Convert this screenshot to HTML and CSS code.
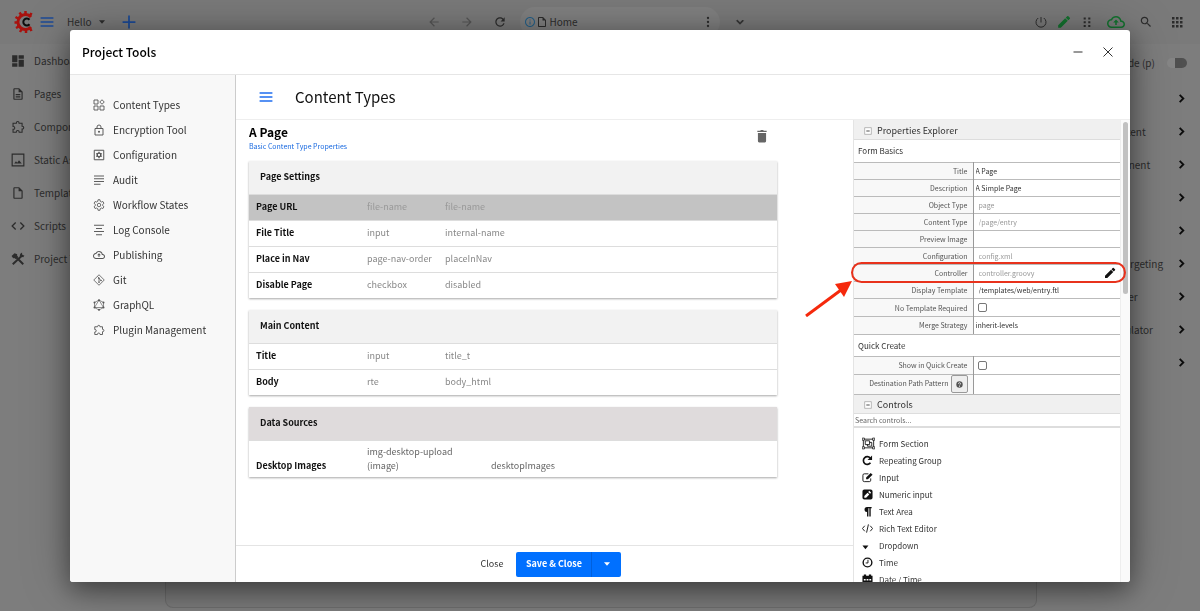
FILE: index.html
```
<!DOCTYPE html>
<html lang="en">
<head>
    <meta charset="UTF-8">
    <title>Project Tools - Content Types</title>
    <link rel="stylesheet" href="styles.css">
</head>
<body>
    <!-- Icon set -->
    <svg class="sprite" aria-hidden="true">
        <symbol id="i-menu" viewBox="0 0 24 24"><path d="M1 5h22M1 12h22M1 19h22" stroke="currentColor" stroke-width="2.6" fill="none"/></symbol>
        <symbol id="i-caret" viewBox="0 0 24 24"><path d="M3 7l9 10 9-10z"/></symbol>
        <symbol id="i-plus" viewBox="0 0 24 24"><path d="M12 1v22M1 12h22" stroke="currentColor" stroke-width="3" fill="none"/></symbol>
        <symbol id="i-back" viewBox="0 0 24 24"><path d="M20 11H7.83l5.59-5.59L12 4l-8 8 8 8 1.41-1.41L7.83 13H20v-2z"/></symbol>
        <symbol id="i-forward" viewBox="0 0 24 24"><path d="M12 4l-1.41 1.41L16.17 11H4v2h12.17l-5.58 5.59L12 20l8-8z"/></symbol>
        <symbol id="i-refresh" viewBox="0 0 24 24"><path d="M17.65 6.35C16.2 4.9 14.21 4 12 4c-4.42 0-7.99 3.58-7.99 8s3.57 8 7.99 8c3.73 0 6.84-2.55 7.73-6h-2.08c-.82 2.33-3.04 4-5.65 4-3.31 0-6-2.69-6-6s2.69-6 6-6c1.66 0 3.14.69 4.22 1.78L13 11h7V4l-2.35 2.35z"/></symbol>
        <symbol id="i-info" viewBox="0 0 24 24"><path d="M11 7h2v2h-2zm0 4h2v6h-2zm1-9C6.48 2 2 6.48 2 12s4.480 10 10 10 10-4.480 10-10S17.52 2 12 2zm0 18c-4.410 0-8-3.590-8-8s3.590-8 8-8 8 3.590 8 8-3.590 8-8 8z"/></symbol>
        <symbol id="i-file" viewBox="0 0 24 24"><path d="M14 2H6c-1.100 0-2 .9-2 2v16c0 1.100.9 2 2 2h12c1.100 0 2-.9 2-2V8l-6-6zM6 20V4h7v5h5v11H6z"/></symbol>
        <symbol id="i-more" viewBox="0 0 24 24"><circle cx="12" cy="4" r="2.300"/><circle cx="12" cy="12" r="2.300"/><circle cx="12" cy="20" r="2.300"/></symbol>
        <symbol id="i-down" viewBox="0 0 24 24"><path d="M7.410 8.590L12 13.170l4.590-4.580L18 10l-6 6-6-6z" stroke="currentColor"/></symbol>
        <symbol id="i-right" viewBox="0 0 24 24"><path d="M8 4l8 8-8 8" stroke="currentColor" stroke-width="4" fill="none"/></symbol>
        <symbol id="i-power" viewBox="0 0 24 24"><path d="M12 2v11M6.500 4a10 10 0 1 0 11 0" fill="none" stroke="currentColor" stroke-width="2"/></symbol>
        <symbol id="i-pencil" viewBox="0 0 24 24"><path d="M2 17.500V22h4.500L18.500 10 14 5.500zM22 6.500a1.500 1.500 0 0 0 0-2L19.500 2a1.500 1.500 0 0 0-2 0L15 4.500 19.500 9z"/></symbol>
        <symbol id="i-grip" viewBox="0 0 24 24"><path d="M4 1h5v5H4zM15 1h5v5h-5zM4 10h5v5H4zM15 10h5v5h-5zM4 19h5v5H4zM15 19h5v5h-5z"/></symbol>
        <symbol id="i-cloud" viewBox="0 0 24 24"><path d="M19.350 10.040C18.670 6.590 15.640 4 12 4 9.110 4 6.600 5.640 5.350 8.040 2.340 8.360 0 10.910 0 14c0 3.310 2.690 6 6 6h13c2.760 0 5-2.240 5-5 0-2.640-2.050-4.780-4.650-4.960zM19 18H6c-2.210 0-4-1.790-4-4 0-2.050 1.530-3.760 3.560-3.970l1.070-.11.5-.95C8.080 7.140 9.940 6 12 6c2.620 0 4.880 1.860 5.390 4.430l.3 1.500 1.530.11c1.560.1 2.780 1.410 2.780 2.960 0 1.650-1.350 3-3 3z"/><path d="M12 8.500L8.300 12.500H11V16h2v-3.500h2.700z"/></symbol>
        <symbol id="i-search" viewBox="0 0 24 24"><path d="M15.500 14h-.79l-.28-.27C15.410 12.590 16 11.110 16 9.500 16 5.910 13.090 3 9.500 3S3 5.910 3 9.500 5.910 16 9.500 16c1.610 0 3.090-.59 4.230-1.570l.27.28v.79l5 4.990L20.490 19l-4.990-5zm-6 0C7.010 14 5 11.990 5 9.500S7.010 5 9.500 5 14 7.010 14 9.500 11.990 14 9.500 14z"/></symbol>
        <symbol id="i-apps" viewBox="0 0 24 24"><path d="M2 2h5v5H2zM10 2h5v5h-5zM18 2h5v5h-5zM2 10h5v5H2zM10 10h5v5h-5zM18 10h5v5h-5zM2 18h5v5H2zM10 18h5v5h-5zM18 18h5v5h-5z"/></symbol>
        <symbol id="i-dashboard" viewBox="0 0 24 24"><path d="M2 2h9v12H2zM2 16h9v6H2zM13 2h9v6h-9zM13 10h9v12h-9z"/></symbol>
        <symbol id="i-page" viewBox="0 0 24 24"><path d="M8 16h8v2H8zm0-4h8v2H8zm6-10H6c-1.100 0-2 .9-2 2v16c0 1.100.89 2 1.990 2H18c1.100 0 2-.9 2-2V8l-6-6zm4 18H6V4h7v5h5v11z"/></symbol>
        <symbol id="i-puzzle" viewBox="0 0 24 24"><path d="M4 5.500h5.200V5a2.300 2.300 0 0 1 4.600 0v.5H19v5.200h.5a2.300 2.300 0 0 1 0 4.600H19v5.700h-5v-.5a2.500 2.500 0 0 0-5 0v.5H3.500v-5H4a2.500 2.500 0 0 0 0-5h-.5V5.500z" stroke="currentColor" stroke-width="1.800" fill="none"/></symbol>
        <symbol id="i-image" viewBox="0 0 24 24"><path d="M2 2h20v20H2z" fill="none" stroke="currentColor" stroke-width="2"/><path d="M5.500 18l3-4 2.200 2.500 3-4L18.500 18z"/></symbol>
        <symbol id="i-code" viewBox="0 0 24 24"><path d="M8 6l-6 6 6 6M16 6l6 6-6 6" fill="none" stroke="currentColor" stroke-width="2.200"/></symbol>
        <symbol id="i-tools" viewBox="0 0 24 24"><path d="M3 21L20 5M9 9l12 12" fill="none" stroke="currentColor" stroke-width="3.400"/><path d="M1 7l5-5 5 2-1 1 2 3-4 4-3-2-1 1zM16 3l3-2v4l4 1-2 3-4-1-2-2z"/></symbol>
        <symbol id="i-types" viewBox="0 0 24 24"><g fill="none" stroke="currentColor" stroke-width="1.800"><path d="M2 2h8v8H2zM2 14h8v8H2zM14 14h8v8h-8zM18 1.500L22.500 6 18 10.500 13.500 6z"/></g></symbol>
        <symbol id="i-lock" viewBox="0 0 24 24"><path d="M4 9h16v13H4zM8 9V6a4 4 0 0 1 8 0v3" fill="none" stroke="currentColor" stroke-width="1.900"/><circle cx="12" cy="15.500" r="2"/></symbol>
        <symbol id="i-config" viewBox="0 0 24 24"><path d="M2.500 2.500h19v19h-19z" fill="none" stroke="currentColor" stroke-width="2"/><circle cx="12" cy="12" r="3.600" fill="none" stroke="currentColor" stroke-width="2.600"/><path d="M12 5.500v3M12 15.500v3M6.500 8.800l2.500 1.500M15 13.700l2.500 1.500M6.500 15.200l2.500-1.500M15 10.300l2.500-1.500" stroke="currentColor" stroke-width="2.400"/></symbol>
        <symbol id="i-lines" viewBox="0 0 24 24"><path d="M2 4h20M2 9.500h20M2 15h20M2 20.500h13" stroke="currentColor" stroke-width="1.900" fill="none"/></symbol>
        <symbol id="i-center" viewBox="0 0 24 24"><path d="M2 2.500h20M6 9h12M2 15h20M6 21.500h12" stroke="currentColor" stroke-width="1.900" fill="none"/></symbol>
        <symbol id="i-gear" viewBox="0 0 24 24"><path d="M10 1.500h4l.6 3.300 2.200 1.200 3.100-1 2 3.500-2.500 2.200v2.600l2.500 2.200-2 3.500-3.100-1-2.200 1.200-.6 3.300h-4l-.6-3.300L7.200 18l-3.100 1-2-3.500 2.500-2.200v-2.600L2.100 8.500l2-3.500 3.100 1 2.200-1.200z" fill="none" stroke="currentColor" stroke-width="1.700"/><circle cx="12" cy="12" r="3.500" fill="none" stroke="currentColor" stroke-width="1.700"/></symbol>
        <symbol id="i-git" viewBox="0 0 24 24"><path d="M12 1.500L22.500 12 12 22.500 1.500 12z" fill="none" stroke="currentColor" stroke-width="1.600"/><path d="M9 5l3 3v8M12 9l4 4" fill="none" stroke="currentColor" stroke-width="1.500"/><circle cx="12" cy="8.500" r="1.600"/><circle cx="12" cy="16.500" r="1.600"/><circle cx="16" cy="13" r="1.600"/></symbol>
        <symbol id="i-graphql" viewBox="0 0 24 24"><path d="M12 2l9 5v10l-9 5-9-5V7zM12 2l9 15H3z" fill="none" stroke="currentColor" stroke-width="1.300"/><circle cx="12" cy="2.500" r="2"/><circle cx="21" cy="7" r="2"/><circle cx="21" cy="17" r="2"/><circle cx="12" cy="21.500" r="2"/><circle cx="3" cy="17" r="2"/><circle cx="3" cy="7" r="2"/></symbol>
        <symbol id="i-minus" viewBox="0 0 24 24"><path d="M3 12h18" stroke="currentColor" stroke-width="2.400"/></symbol>
        <symbol id="i-close" viewBox="0 0 24 24"><path d="M3 3l18 18M21 3L3 21" stroke="currentColor" stroke-width="2"/></symbol>
        <symbol id="i-trash" viewBox="0 0 24 24"><path d="M5 7h14v14a2 2 0 0 1-2 2H7a2 2 0 0 1-2-2zM4 3h5l1-1.500h4L15 3h5v2H4z"/></symbol>
        <symbol id="i-box" viewBox="0 0 24 24"><path d="M2 2h20v20H2z" fill="#fff" stroke="currentColor" stroke-width="2"/><path d="M7 12h10" stroke="#333" stroke-width="2.600"/></symbol>
        <symbol id="i-group" viewBox="0 0 24 24"><path d="M2.500 4h19v16h-19z" fill="none" stroke="currentColor" stroke-width="1.600"/><path d="M6 7h8v7H6zM14 10h4v7h-8v-3" fill="none" stroke="currentColor" stroke-width="1.600"/><path d="M.5 2h4v4h-4zM19.500 2h4v4h-4zM.5 18h4v4h-4zM19.500 18h4v4h-4z" fill="#fff" stroke="currentColor" stroke-width="1.400"/></symbol>
        <symbol id="i-repeat" viewBox="0 0 24 24"><path d="M18.500 17A8.500 8.500 0 1 1 18 6.500" fill="none" stroke="currentColor" stroke-width="3.600"/><path d="M22 1v10H12z"/></symbol>
        <symbol id="i-edit" viewBox="0 0 24 24"><path d="M19 14v4a3 3 0 0 1-3 3H5a3 3 0 0 1-3-3V7a3 3 0 0 1 3-3h9" fill="none" stroke="currentColor" stroke-width="2"/><path d="M9 12L19 2l4 4-10 10H9z"/></symbol>
        <symbol id="i-numeric" viewBox="0 0 24 24"><path fill-rule="evenodd" d="M5 1h14a4 4 0 0 1 4 4v14a4 4 0 0 1-4 4H5a4 4 0 0 1-4-4V5a4 4 0 0 1 4-4zM5 19h4l7-7-4-4-7 7zM17.500 10.500L20 8l-4-4-2.500 2.500z"/></symbol>
        <symbol id="i-para" viewBox="0 0 24 24"><path d="M21 2v3h-2v18h-3V5h-2v18h-3V13a5.500 5.500 0 0 1 0-11z"/></symbol>
        <symbol id="i-rich" viewBox="0 0 24 24"><path d="M6 6l-5 6 5 6M18 6l5 6-5 6M14 3l-4 18" fill="none" stroke="currentColor" stroke-width="2"/></symbol>
        <symbol id="i-drop" viewBox="0 0 24 24"><path d="M1 12h13l-6.500 8z"/></symbol>
        <symbol id="i-clock" viewBox="0 0 24 24"><circle cx="12" cy="12" r="9.500" fill="none" stroke="currentColor" stroke-width="3"/><path d="M13 6v7H8" fill="none" stroke="currentColor" stroke-width="2"/></symbol>
        <symbol id="i-calendar" viewBox="0 0 24 24"><path fill-rule="evenodd" d="M1 4h3V1h5v3h6V1h5v3h3v19H1zM4 11v3h4v-3zM10 11v3h4v-3zM16 11v3h4v-3z"/></symbol>
        <symbol id="i-help" viewBox="0 0 24 24"><circle cx="12" cy="12" r="11"/><path d="M8.500 9.500a3.500 3.500 0 1 1 5 3c-1 .6-1.500 1-1.500 2.500M12 17v3" fill="none" stroke="#fff" stroke-width="2.600"/></symbol>
    </svg>

    <!-- Studio page behind the dialog -->
    <div class="studio">
        <header class="topbar">
            <div class="topbar-left">
                <svg class="logo" viewBox="0 0 40 44">
                    <path d="M34 12A15 15 0 1 0 34 32" fill="none" stroke="#a8120e" stroke-width="6"/>
                    <path d="M23 0v8M11 3l5 7M3 12l7 4M1 23h8M4 34l7-4M12 42l4-7M24 44v-8M35 40l-4-7M35 4l-4 7" stroke="#a8120e" stroke-width="5"/>
                    <path d="M31 17.500A7 7 0 1 0 31 26.500" fill="none" stroke="#0c0c0c" stroke-width="4"/>
                </svg>
                <svg class="icon blue"><use href="#i-menu"/></svg>
                <button class="site-switch">Hello <svg class="icon tiny"><use href="#i-caret"/></svg></button>
                <svg class="icon blue"><use href="#i-plus"/></svg>
            </div>
            <div class="topbar-nav">
                <svg class="icon faded"><use href="#i-back"/></svg>
                <svg class="icon faded"><use href="#i-forward"/></svg>
                <svg class="icon"><use href="#i-refresh"/></svg>
                <div class="address">
                    <svg class="icon small info"><use href="#i-info"/></svg>
                    <svg class="icon small"><use href="#i-file"/></svg>
                    <span>Home</span>
                    <svg class="icon small last"><use href="#i-more"/></svg>
                </div>
                <svg class="icon"><use href="#i-down"/></svg>
            </div>
            <div class="topbar-right">
                <svg class="icon small"><use href="#i-power"/></svg>
                <svg class="icon green"><use href="#i-pencil"/></svg>
                <svg class="icon grip"><use href="#i-grip"/></svg>
                <svg class="icon large green"><use href="#i-cloud"/></svg>
                <svg class="icon"><use href="#i-search"/></svg>
                <svg class="icon apps"><use href="#i-apps"/></svg>
            </div>
        </header>
        <div class="studio-body">
            <nav class="side-nav">
                <a href="#"><svg class="icon"><use href="#i-dashboard"/></svg>Dashboard</a>
                <a href="#"><svg class="icon"><use href="#i-page"/></svg>Pages</a>
                <a href="#"><svg class="icon"><use href="#i-puzzle"/></svg>Components</a>
                <a href="#"><svg class="icon"><use href="#i-image"/></svg>Static Assets</a>
                <a href="#"><svg class="icon"><use href="#i-file"/></svg>Templates</a>
                <a href="#"><svg class="icon"><use href="#i-code"/></svg>Scripts</a>
                <a href="#"><svg class="icon"><use href="#i-tools"/></svg>Project Tools</a>
            </nav>
            <div class="preview"></div>
            <aside class="toolbox">
                <div class="toolbox-mode">Edit Mode (p)<span class="toggle"></span></div>
                <a href="#">Search<svg class="icon chevron"><use href="#i-right"/></svg></a>
                <a href="#">Search Content<svg class="icon chevron"><use href="#i-right"/></svg></a>
                <a href="#">Add Component<svg class="icon chevron"><use href="#i-right"/></svg></a>
                <a href="#">Assets<svg class="icon chevron"><use href="#i-right"/></svg></a>
                <a href="#">Browse<svg class="icon chevron"><use href="#i-right"/></svg></a>
                <a href="#">Audience Targeting<svg class="icon chevron"><use href="#i-right"/></svg></a>
                <a href="#">Page Explorer<svg class="icon chevron"><use href="#i-right"/></svg></a>
                <a href="#">Device Simulator<svg class="icon chevron"><use href="#i-right"/></svg></a>
                <a href="#">Site<svg class="icon chevron"><use href="#i-right"/></svg></a>
            </aside>
        </div>
    </div>

    <!-- Project Tools dialog -->
    <div class="overlay">
        <div class="dialog" role="dialog" aria-labelledby="dialog-title">
            <header class="dialog-header">
                <h1 id="dialog-title">Project Tools</h1>
                <button class="icon-button" aria-label="Minimize"><svg class="icon small"><use href="#i-minus"/></svg></button>
                <button class="icon-button" aria-label="Close dialog"><svg class="icon small"><use href="#i-close"/></svg></button>
            </header>
            <div class="dialog-body">
                <nav class="tools-nav">
                    <a href="#"><svg class="icon small"><use href="#i-types"/></svg>Content Types</a>
                    <a href="#"><svg class="icon small"><use href="#i-lock"/></svg>Encryption Tool</a>
                    <a href="#"><svg class="icon small"><use href="#i-config"/></svg>Configuration</a>
                    <a href="#"><svg class="icon small"><use href="#i-lines"/></svg>Audit</a>
                    <a href="#"><svg class="icon small"><use href="#i-gear"/></svg>Workflow States</a>
                    <a href="#"><svg class="icon small"><use href="#i-center"/></svg>Log Console</a>
                    <a href="#"><svg class="icon small"><use href="#i-cloud"/></svg>Publishing</a>
                    <a href="#"><svg class="icon small"><use href="#i-git"/></svg>Git</a>
                    <a href="#"><svg class="icon small"><use href="#i-graphql"/></svg>GraphQL</a>
                    <a href="#"><svg class="icon small"><use href="#i-puzzle"/></svg>Plugin Management</a>
                </nav>
                <main class="tool">
                    <header class="tool-header">
                        <svg class="icon"><use href="#i-menu"/></svg>
                        <h2>Content Types</h2>
                    </header>
                    <div class="workspace">
                        <section class="editor">
                            <div class="form">
                                <div class="form-title">
                                    <div>
                                        <h3>A Page</h3>
                                        <a href="#">Basic Content Type Properties</a>
                                    </div>
                                    <button class="icon-button trash" aria-label="Delete"><svg class="icon"><use href="#i-trash"/></svg></button>
                                </div>
                                <table class="fields">
                                    <colgroup><col class="col-label"><col class="col-type"><col></colgroup>
                                    <thead><tr><th colspan="3">Page Settings</th></tr></thead>
                                    <tbody>
                                        <tr class="selected"><th>Page URL</th><td>file-name</td><td>file-name</td></tr>
                                        <tr><th>File Title</th><td>input</td><td>internal-name</td></tr>
                                        <tr><th>Place in Nav</th><td>page-nav-order</td><td>placeInNav</td></tr>
                                        <tr><th>Disable Page</th><td>checkbox</td><td>disabled</td></tr>
                                    </tbody>
                                </table>
                                <table class="fields">
                                    <colgroup><col class="col-label"><col class="col-type"><col></colgroup>
                                    <thead><tr><th colspan="3">Main Content</th></tr></thead>
                                    <tbody>
                                        <tr><th>Title</th><td>input</td><td>title_t</td></tr>
                                        <tr><th>Body</th><td>rte</td><td>body_html</td></tr>
                                    </tbody>
                                </table>
                                <table class="fields sources">
                                    <colgroup><col class="col-label"><col class="col-source"><col></colgroup>
                                    <thead><tr><th colspan="3">Data Sources</th></tr></thead>
                                    <tbody>
                                        <tr><th>Desktop Images</th><td>img-desktop-upload (image)</td><td>desktopImages</td></tr>
                                    </tbody>
                                </table>
                            </div>
                            <footer class="actions">
                                <button class="close">Close</button>
                                <div class="save-group">
                                    <button class="save">Save &amp; Close</button>
                                    <button class="save-more" aria-label="More save options"><svg class="icon tiny"><use href="#i-caret"/></svg></button>
                                </div>
                            </footer>
                        </section>
                        <aside class="explorer">
                            <h4><svg class="icon tiny"><use href="#i-box"/></svg>Properties Explorer</h4>
                            <h5>Form Basics</h5>
                            <table class="props">
                                <tr><th><label for="p-title">Title</label></th><td><input id="p-title" type="text" value="A Page"></td></tr>
                                <tr><th><label for="p-desc">Description</label></th><td><input id="p-desc" type="text" value="A Simple Page"></td></tr>
                                <tr><th><label for="p-object">Object Type</label></th><td><input id="p-object" class="readonly" type="text" value="page" readonly></td></tr>
                                <tr><th><label for="p-type">Content Type</label></th><td><input id="p-type" class="readonly" type="text" value="/page/entry" readonly></td></tr>
                                <tr><th><label for="p-image">Preview Image</label></th><td><input id="p-image" type="text"></td></tr>
                                <tr><th><label for="p-config">Configuration</label></th><td><input id="p-config" class="readonly" type="text" value="config.xml" readonly></td></tr>
                                <tr><th><label for="p-controller">Controller</label></th><td><div class="with-edit"><input id="p-controller" class="readonly" type="text" value="controller.groovy" readonly><button aria-label="Edit controller"><svg class="icon small"><use href="#i-pencil"/></svg></button></div></td></tr>
                                <tr><th><label for="p-template">Display Template</label></th><td><input id="p-template" class="indent" type="text" value="/templates/web/entry.ftl"></td></tr>
                                <tr class="check"><th><label for="p-notpl">No Template Required</label></th><td><input id="p-notpl" type="checkbox"></td></tr>
                                <tr><th><label for="p-merge">Merge Strategy</label></th><td><input id="p-merge" type="text" value="inherit-levels"></td></tr>
                            </table>
                            <h5 class="divided">Quick Create</h5>
                            <table class="props">
                                <tr class="check"><th><label for="p-quick">Show in Quick Create</label></th><td><input id="p-quick" type="checkbox"></td></tr>
                                <tr class="path"><th><label for="p-path">Destination Path Pattern</label><button class="help" aria-label="Help"><svg class="icon"><use href="#i-help"/></svg></button></th><td><input id="p-path" type="text"></td></tr>
                            </table>
                            <h4 class="divided"><svg class="icon tiny"><use href="#i-box"/></svg>Controls</h4>
                            <input class="search" type="text" placeholder="Search controls..." aria-label="Search controls">
                            <ul class="controls">
                                <li><svg class="icon wide"><use href="#i-group"/></svg>Form Section</li>
                                <li><svg class="icon"><use href="#i-repeat"/></svg>Repeating Group</li>
                                <li><svg class="icon"><use href="#i-edit"/></svg>Input</li>
                                <li><svg class="icon"><use href="#i-numeric"/></svg>Numeric input</li>
                                <li><svg class="icon"><use href="#i-para"/></svg>Text Area</li>
                                <li><svg class="icon"><use href="#i-rich"/></svg>Rich Text Editor</li>
                                <li><svg class="icon"><use href="#i-drop"/></svg>Dropdown</li>
                                <li><svg class="icon"><use href="#i-clock"/></svg>Time</li>
                                <li><svg class="icon"><use href="#i-calendar"/></svg>Date / Time</li>
                            </ul>
                        </aside>
                        <div class="scroll"><div class="scroll-thumb"></div></div>
                        <!-- Marks the controller property -->
                        <div class="callout"></div>
                        <svg class="callout-arrow" viewBox="0 0 48 38"><path d="M1 37L36 11" stroke="#f5290c" stroke-width="3"/><path d="M47 2L39 18 30 5z" fill="#f5290c"/></svg>
                    </div>
                </main>
            </div>
        </div>
    </div>
</body>
</html>
```
FILE: styles.css
```
* {
    box-sizing: border-box;
}
body {
    margin: 0;
    font-family: "Noto Sans CJK SC", "Noto Sans", sans-serif;
    font-size: 10px;
    line-height: 16px;
    color: #333;
    background: #7d7d7d;
    overflow: hidden;
}
h1, h2, h3, h4, h5, ul {
    margin: 0;
    padding: 0;
}
a {
    color: inherit;
    text-decoration: none;
}
button, input {
    font: inherit;
    color: inherit;
    margin: 0;
    padding: 0;
    border: none;
    background: none;
}
button {
    cursor: pointer;
}
.sprite {
    position: absolute;
    width: 0;
    height: 0;
}
.icon {
    width: 14px;
    height: 14px;
    flex: none;
    fill: currentColor;
    display: block;
}
.icon.small {
    width: 12px;
    height: 12px;
}
.icon.tiny {
    width: 8px;
    height: 8px;
}
.icon.large {
    width: 18px;
    height: 18px;
}

/* Page behind the dialog */
.studio {
    height: 100vh;
    display: flex;
    flex-direction: column;
    color: #2c2c2c;
}
.topbar {
    display: grid;
    grid-template-columns: 1fr auto 1fr;
    height: 44px;
    padding: 0 17px 0 14px;
    background: #7a7a7a;
}
.topbar > div {
    display: flex;
    align-items: center;
}
.logo {
    width: 20px;
    height: 22px;
    margin-right: 6px;
}
.blue {
    color: #1c4a96;
}
.site-switch {
    display: flex;
    align-items: center;
    gap: 6px;
    margin: 0 16px 0 13px;
}
.topbar .topbar-nav {
    gap: 19px;
    margin-right: 24px;
}
.faded {
    color: #565656;
}
.address {
    display: flex;
    align-items: center;
    gap: 0;
    width: 200px;
    height: 30px;
    padding: 0 6px 0 4px;
    margin: 0 -6px;
    border-radius: 15px;
    background: #808080;
}
.address span {
    margin-left: 2px;
}
.address .last {
    margin-left: auto;
}
.info {
    color: #23608a;
}
.topbar .topbar-right {
    justify-content: flex-end;
    gap: 10px;
}
.green {
    color: #12722e;
}
.icon.grip {
    width: 12px;
    height: 10px;
}
.topbar-right .large {
    margin: 0 4px;
}
.icon.apps {
    width: 12px;
    height: 12px;
    margin-left: 8px;
}
.studio-body {
    flex: 1;
    display: grid;
    grid-template-columns: 165px 1fr 163px;
}
.side-nav a {
    display: flex;
    align-items: center;
    gap: 9px;
    height: 33px;
    padding-left: 11px;
}
.preview {
    margin-bottom: 3px;
    border: 1px solid #6c6c6c;
    border-top: none;
    border-radius: 0 0 8px 8px;
    background: #7a7a7a;
}
.toolbox {
    padding-right: 11px;
}
.toolbox a, .toolbox-mode {
    display: flex;
    align-items: center;
    justify-content: space-between;
    height: 33px;
    padding-left: 37px;
}
.toolbox-mode {
    height: 38px;
    padding: 0 2px 0 56px;
}
.chevron {
    width: 11px;
    height: 11px;
    color: #0c0c0c;
    margin-right: 2px;
}
.toggle {
    width: 20px;
    height: 10px;
    border-radius: 5px;
    background: linear-gradient(to right, #868686 40%, #505050 40%);
}

/* Dialog */
.overlay {
    position: fixed;
    inset: 0;
    display: flex;
    padding: 30px 70px 29px;
}
.dialog {
    flex: 1;
    min-width: 0;
    display: flex;
    flex-direction: column;
    overflow: hidden;
    border-radius: 3px;
    background: #fff;
    box-shadow: 0 8px 24px rgba(0, 0, 0, 0.4), 0 2px 50px rgba(0, 0, 0, 0.25);
}
.dialog-header {
    display: flex;
    align-items: center;
    gap: 18px;
    height: 45px;
    padding: 0 16px 0 12px;
    border-bottom: 1px solid #e6e6e6;
}
.dialog-header h1 {
    flex: 1;
    font-size: 12px;
    font-weight: 500;
    color: #000;
}
.dialog-body {
    flex: 1;
    min-height: 0;
    display: flex;
}
.tools-nav {
    width: 166px;
    padding: 17px 0 0 23px;
    background: #f8f8f8;
    border-right: 1px solid #ccc;
}
.tools-nav a {
    display: flex;
    align-items: center;
    gap: 8px;
    height: 25px;
}
.tools-nav .icon {
    color: #555;
}
.tool {
    flex: 1;
    min-width: 0;
    display: flex;
    flex-direction: column;
}
.tool-header {
    display: flex;
    align-items: center;
    gap: 22px;
    height: 45px;
    padding-left: 23px;
    border-bottom: 1px solid #eee;
}
.tool-header .icon {
    color: #1f6df0;
}
.tool-header h2 {
    font-size: 15px;
    font-weight: 400;
    color: #111;
}
.workspace {
    position: relative;
    flex: 1;
    min-height: 0;
    display: flex;
}

/* Form definition */
.editor {
    flex: 1;
    min-width: 0;
    display: flex;
    flex-direction: column;
}
.form {
    flex: 1;
    padding: 4px 76px 0 13px;
}
.form-title {
    display: flex;
    justify-content: space-between;
    height: 37px;
}
.form-title h3 {
    font-size: 12px;
    font-weight: 700;
    color: #000;
}
.form-title a {
    display: block;
    font-size: 7px;
    line-height: 12px;
    color: #1a6ae0;
}
.trash {
    align-self: flex-start;
    margin: 5px 8px 0 0;
    color: #666;
}
.fields {
    width: 100%;
    margin-bottom: 12px;
    table-layout: fixed;
    border-collapse: collapse;
    box-shadow: 0 1px 2px rgba(0, 0, 0, 0.35);
    font-size: 9px;
    line-height: 14px;
    color: #888;
}
.col-label {
    width: 118px;
}
.col-type {
    width: 78px;
}
.col-source {
    width: 124px;
}
.fields th, .fields td {
    height: 26px;
    padding: 0;
    text-align: left;
    font-weight: 400;
    border-top: 1px solid #ddd;
}
.fields th {
    padding-left: 7px;
    font-weight: 700;
    color: #111;
}
.fields thead th {
    height: 33px;
    padding-left: 11px;
    border-top: none;
    background: #f2f2f2;
}
.fields .selected {
    background: #c3c3c3;
    color: #999;
}
.sources tbody th, .sources td {
    height: 37px;
    padding-bottom: 4px;
    vertical-align: bottom;
}
.sources td {
    color: #666;
}
.sources td:nth-child(2) {
    padding-right: 30px;
}
.sources thead th {
    background: #dfdbdc;
}
.actions {
    display: flex;
    align-items: center;
    justify-content: center;
    gap: 13px;
    height: 37px;
    padding-left: 13px;
    border-top: 1px solid #e4e4e4;
    font-size: 9px;
}
.save-group {
    display: flex;
    height: 25px;
    border-radius: 2px;
    overflow: hidden;
    background: #0070ff;
    color: #fff;
}
.save {
    width: 75px;
    font-weight: 700;
}
.save-more {
    display: flex;
    align-items: center;
    justify-content: center;
    width: 30px;
    border-left: 1px solid #0060dd;
}

/* Properties and controls */
.explorer {
    width: 268px;
    overflow: hidden;
    border-left: 1px solid #e4e4e4;
    border-right: 1px solid #eee;
    font-size: 7px;
}
.explorer h4 {
    display: flex;
    align-items: center;
    gap: 5px;
    height: 20px;
    padding: 2px 0 0 10px;
    font-size: 9px;
    font-weight: 400;
    background: #f0f0f0;
    border-bottom: 1px solid #ddd;
}
.explorer h4 .icon {
    color: #999;
}
.explorer h5 {
    height: 22px;
    padding-left: 4px;
    font-size: 8px;
    line-height: 22px;
    font-weight: 400;
}
.explorer .divided {
    border-top: 1px solid #bbb;
}
.props {
    width: 100%;
    border-collapse: collapse;
    table-layout: fixed;
    line-height: 12px;
}
.props th, .props td {
    height: 17px;
    padding: 0;
    border-top: 1px solid #bbb;
}
.props th {
    width: 119px;
    padding-right: 5px;
    text-align: right;
    font-weight: 400;
    color: #555;
    background: #f8f8f8;
    border-right: 1px solid #999;
}
.props td {
    padding-left: 2px;
}
.props input[type="text"] {
    display: block;
    width: 100%;
    height: 14px;
}
.props .readonly {
    padding-left: 3px;
    color: #999;
}
.props .indent {
    padding-left: 3px;
}
.props input[type="checkbox"] {
    display: block;
    width: 9px;
    height: 9px;
    margin-left: 2px;
    appearance: none;
    border: 1px solid #777;
    border-radius: 2px;
    background: #fff;
}
.props .check th, .props .check td {
    height: 18px;
}
.with-edit {
    display: flex;
    align-items: center;
    padding-right: 4px;
    color: #111;
}
.props .path th, .props .path td {
    height: 20px;
}
.help {
    display: inline-flex;
    align-items: center;
    justify-content: center;
    width: 17px;
    height: 18px;
    margin-left: 2px;
    vertical-align: middle;
    border: 1px solid #999;
    border-radius: 2px;
    background: #eee;
}
.help .icon {
    width: 7px;
    height: 7px;
}
.search {
    display: block;
    width: 100%;
    height: 14px;
    padding-left: 1px;
    border-bottom: 2px solid #ddd;
}
.search::placeholder {
    color: #666;
}
.controls {
    padding: 7px 0 0 8px;
    list-style: none;
    font-size: 8px;
}
.controls li {
    display: flex;
    align-items: center;
    gap: 6px;
    height: 17px;
}
.controls .icon {
    width: 11px;
    height: 11px;
    color: #111;
}
.controls .wide {
    width: 13px;
    height: 13px;
    margin-right: -2px;
}
.scroll {
    width: 9px;
    padding: 2px 2px 0;
    background: #fafafa;
}
.scroll-thumb {
    height: 172px;
    border-radius: 3px;
    background: #c1c1c1;
}

/* Callout lies over the property table */
.callout {
    position: absolute;
    top: 142px;
    right: 4px;
    width: 275px;
    height: 21px;
    border: 2px solid #e8321c;
    border-radius: 11px;
}
.callout-arrow {
    position: absolute;
    top: 159px;
    right: 277px;
    width: 48px;
    height: 38px;
}
```
